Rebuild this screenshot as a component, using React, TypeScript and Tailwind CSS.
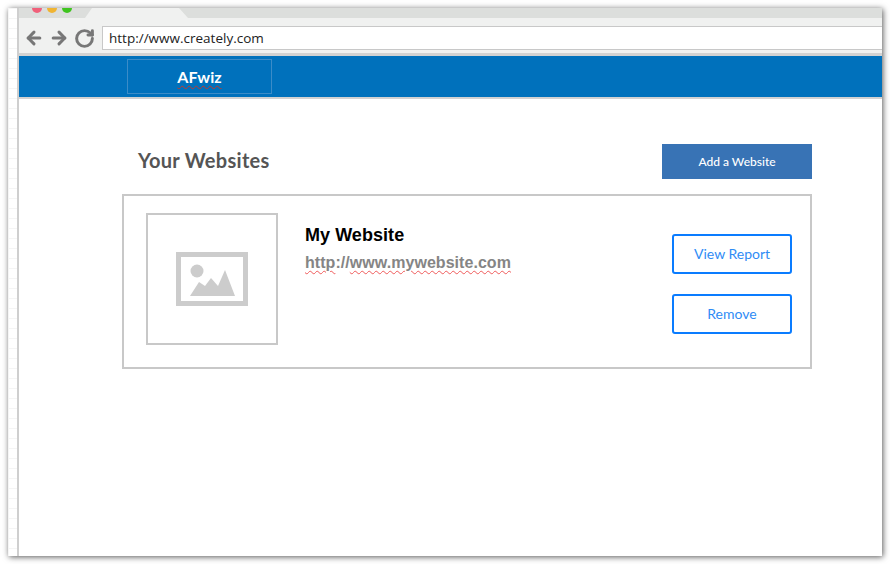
import { ArrowLeft, ArrowRight, RotateCw } from 'lucide-react'

function Placeholder() {
  return (
    <svg width="72" height="54" viewBox="0 0 72 54" className="block">
      <rect x="2.5" y="2.5" width="67" height="49" fill="none" stroke="#cccccc" strokeWidth="5" />
      <circle cx="21" cy="19" r="6.5" fill="#cccccc" />
      <path d="M14 44 L23 30 L29 34 L35 26 L42 34 L49 18 L59 44 Z" fill="#cccccc" />
    </svg>
  )
}

function OutlineButton({ label }: { label: string }) {
  return (
    <button className="w-[120px] h-10 rounded-[3px] border-2 border-[#0a7cff] bg-white text-sm text-[#2f8cf5]">
      {label}
    </button>
  )
}

export default function App() {
  return (
    <div className="w-[890px] h-[564px] p-2 bg-white font-['Lato',sans-serif]">
      <div className="flex w-[874px] h-[548px] overflow-hidden bg-white shadow-[1px_1px_6px_rgba(0,0,0,0.65)]">
        {/* grid gutter */}
        <div className="w-[11px] shrink-0 border-r-2 border-[#cfcfcf] bg-[linear-gradient(#f5f5f5_1px,transparent_1px),linear-gradient(90deg,#f5f5f5_1px,transparent_1px)] bg-[size:10px_10px]" />

        <div className="flex-1 flex flex-col min-w-0">
          {/* tab strip */}
          <div className="relative h-[10px] shrink-0 bg-[#dcdedc]">
            <div className="absolute left-[66px] top-0 w-[103px] h-[10px] bg-[#f0f1f0] [clip-path:polygon(7px_0,94px_0,100%_100%,0_100%)]" />
            <div className="absolute left-[13px] top-[-5px] flex gap-[5px]">
              <span className="w-[10px] h-[10px] rounded-full bg-[#f0607a]" />
              <span className="w-[10px] h-[10px] rounded-full bg-[#f0b432]" />
              <span className="w-[10px] h-[10px] rounded-full bg-[#3fc41f]" />
            </div>
          </div>

          {/* toolbar */}
          <div className="h-[38px] shrink-0 flex items-start pt-[8px] bg-[#f0f1f0] border-b-[3px] border-[#d2d2d2]">
            <div className="w-[83px] shrink-0 flex items-center pl-[5px] gap-[5px] h-6 text-[#777777]">
              <ArrowLeft size={20} strokeWidth={3.6} />
              <ArrowRight size={20} strokeWidth={3.6} />
              <RotateCw size={21} strokeWidth={3.4} />
            </div>
            <div className="flex-1 h-6 flex items-center pl-[6px] bg-white border-y border-l border-[#c8c8c8] text-[13.5px] text-[#222222] font-['Open_Sans',sans-serif]">
              http://www.creately.com
            </div>
          </div>

          {/* app nav */}
          <div className="h-[41px] shrink-0 flex items-start pt-[3px] bg-[#0071bc]">
            <div className="ml-[108px] w-[145px] h-[35px] flex items-center justify-center border border-[#3b8cc8] text-white font-bold text-base">
              <span className="underline decoration-wavy decoration-1 decoration-[#c0392b] underline-offset-2">AFwiz</span>
            </div>
          </div>
          <div className="h-[2px] shrink-0 bg-[#d2d2d2]" />

          {/* content */}
          <div className="ml-[103px] w-[690px] pt-[45px]">
            <div className="flex items-center justify-between pl-4 mb-[15px]">
              <h1 className="pb-1 text-xl font-bold tracking-[0.3px] text-[#555555]">Your Websites</h1>
              <button className="w-[150px] h-[35px] bg-[#3873b5] text-white text-xs font-medium">Add a Website</button>
            </div>

            <div className="flex h-[175px] border-2 border-[#c8c8c8] pl-[22px] pr-[18px] pt-[17px]">
              <div className="w-[132px] h-[132px] shrink-0 flex items-center justify-center border-2 border-[#c8c8c8]">
                <Placeholder />
              </div>
              <div className="flex-1 ml-[27px] pt-[10px] font-['Liberation_Sans',sans-serif] font-bold">
                <div className="text-lg leading-6 tracking-[0.05px] text-black">My Website</div>
                <div className="mt-[4px] text-base leading-6 tracking-[0.05px] text-[#858585]">
                  <span className="underline decoration-wavy decoration-1 decoration-[#ef5a5a] underline-offset-2">http</span>
                  ://
                  <span className="underline decoration-wavy decoration-1 decoration-[#ef5a5a] underline-offset-2">www.mywebsite.com</span>
                </div>
              </div>
              <div className="flex flex-col gap-5 pt-[21px]">
                <OutlineButton label="View Report" />
                <OutlineButton label="Remove" />
              </div>
            </div>
          </div>
        </div>
      </div>
    </div>
  )
}
